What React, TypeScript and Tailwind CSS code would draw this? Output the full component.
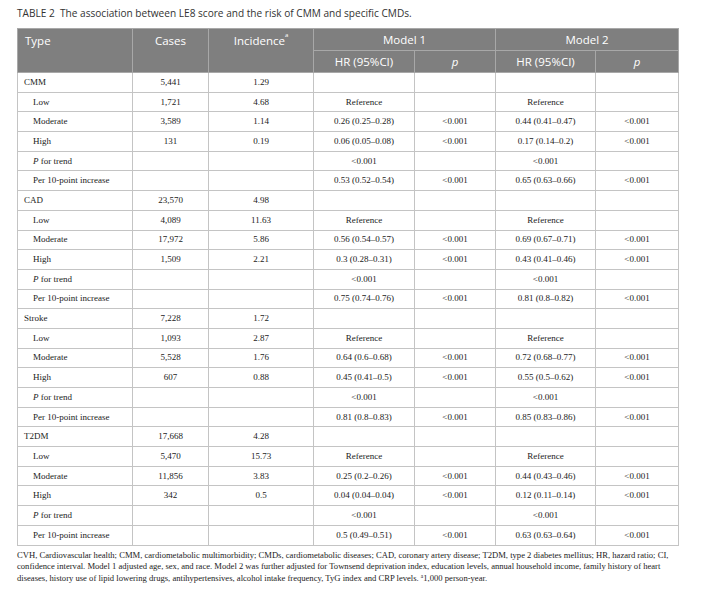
import React from 'react'

type Row = {
  label: React.ReactNode
  group?: boolean
  cases?: string
  inc?: string
  hr1?: string
  p1?: string
  hr2?: string
  p2?: string
}

const groups: { name: string; cases: string; inc: string; rows: string[][] }[] = [
  {
    name: 'CMM',
    cases: '5,441',
    inc: '1.29',
    rows: [
      ['1,721', '4.68', 'Reference', '', 'Reference', ''],
      ['3,589', '1.14', '0.26 (0.25–0.28)', '<0.001', '0.44 (0.41–0.47)', '<0.001'],
      ['131', '0.19', '0.06 (0.05–0.08)', '<0.001', '0.17 (0.14–0.2)', '<0.001'],
      ['', '', '<0.001', '', '<0.001', ''],
      ['', '', '0.53 (0.52–0.54)', '<0.001', '0.65 (0.63–0.66)', '<0.001'],
    ],
  },
  {
    name: 'CAD',
    cases: '23,570',
    inc: '4.98',
    rows: [
      ['4,089', '11.63', 'Reference', '', 'Reference', ''],
      ['17,972', '5.86', '0.56 (0.54–0.57)', '<0.001', '0.69 (0.67–0.71)', '<0.001'],
      ['1,509', '2.21', '0.3 (0.28–0.31)', '<0.001', '0.43 (0.41–0.46)', '<0.001'],
      ['', '', '<0.001', '', '<0.001', ''],
      ['', '', '0.75 (0.74–0.76)', '<0.001', '0.81 (0.8–0.82)', '<0.001'],
    ],
  },
  {
    name: 'Stroke',
    cases: '7,228',
    inc: '1.72',
    rows: [
      ['1,093', '2.87', 'Reference', '', 'Reference', ''],
      ['5,528', '1.76', '0.64 (0.6–0.68)', '<0.001', '0.72 (0.68–0.77)', '<0.001'],
      ['607', '0.88', '0.45 (0.41–0.5)', '<0.001', '0.55 (0.5–0.62)', '<0.001'],
      ['', '', '<0.001', '', '<0.001', ''],
      ['', '', '0.81 (0.8–0.83)', '<0.001', '0.85 (0.83–0.86)', '<0.001'],
    ],
  },
  {
    name: 'T2DM',
    cases: '17,668',
    inc: '4.28',
    rows: [
      ['5,470', '15.73', 'Reference', '', 'Reference', ''],
      ['11,856', '3.83', '0.25 (0.2–0.26)', '<0.001', '0.44 (0.43–0.46)', '<0.001'],
      ['342', '0.5', '0.04 (0.04–0.04)', '<0.001', '0.12 (0.11–0.14)', '<0.001'],
      ['', '', '<0.001', '', '<0.001', ''],
      ['', '', '0.5 (0.49–0.51)', '<0.001', '0.63 (0.63–0.64)', '<0.001'],
    ],
  },
]

const subLabels: React.ReactNode[] = [
  'Low',
  'Moderate',
  'High',
  <>
    <i>P</i> for trend
  </>,
  'Per 10-point increase',
]

const rows: Row[] = groups.flatMap((g) => [
  { label: g.name, group: true, cases: g.cases, inc: g.inc },
  ...g.rows.map((r, i) => ({
    label: subLabels[i],
    cases: r[0],
    inc: r[1],
    hr1: r[2],
    p1: r[3],
    hr2: r[4],
    p2: r[5],
  })),
])

const td = 'h-[19.7px] border border-[#c4c4c4] text-center align-middle p-0 leading-none'
const th = 'border border-[#a8a8a8] font-normal text-white text-[11.5px] leading-none p-0'

export default function App() {
  return (
    <div className="w-[704px] h-[590px] bg-white overflow-hidden pl-[17px] pt-[7px] text-[#222]">
      <p className="font-['Open_Sans',sans-serif] text-[10.1px] leading-[12px] text-[#333] h-[21px] whitespace-nowrap">
        TABLE 2&nbsp; The association between LE8 score and the risk of CMM and specific CMDs.
      </p>

      <table className="table-fixed border-collapse w-[661px] font-['Liberation_Serif',serif] text-[9px]">
        <colgroup>
          <col className="w-[115px]" />
          <col className="w-[76px]" />
          <col className="w-[105px]" />
          <col className="w-[101px]" />
          <col className="w-[81px]" />
          <col className="w-[100px]" />
          <col className="w-[83px]" />
        </colgroup>
        <thead className="bg-[#7f7f7f] font-['Open_Sans',sans-serif]">
          <tr>
            <th rowSpan={2} className={`${th} text-left align-top pl-[7px] pt-[6px]`}>
              Type
            </th>
            <th rowSpan={2} className={`${th} text-center align-top pt-[6px]`}>
              Cases
            </th>
            <th rowSpan={2} className={`${th} text-center align-top pt-[6px]`}>
              Incidence<sup className="text-[6px] align-super">a</sup>
            </th>
            <th colSpan={2} className={`${th} h-[22px] text-center`}>
              Model 1
            </th>
            <th colSpan={2} className={`${th} h-[22px] text-center`}>
              Model 2
            </th>
          </tr>
          <tr>
            <th className={`${th} h-[22px] text-center`}>HR (95%CI)</th>
            <th className={`${th} text-center italic`}>p</th>
            <th className={`${th} text-center`}>HR (95%CI)</th>
            <th className={`${th} text-center italic`}>p</th>
          </tr>
        </thead>
        <tbody>
          {rows.map((r, i) => (
            <tr key={i}>
              <td className={`${td} text-left ${r.group ? 'pl-[6px]' : 'pl-[15px]'}`}>{r.label}</td>
              <td className={td}>{r.cases}</td>
              <td className={td}>{r.inc}</td>
              <td className={td}>{r.hr1}</td>
              <td className={td}>{r.p1}</td>
              <td className={td}>{r.hr2}</td>
              <td className={td}>{r.p2}</td>
            </tr>
          ))}
        </tbody>
      </table>

      <div className="mt-[4px] font-['Liberation_Serif',serif] text-[8.6px] leading-[11.6px] text-[#222] whitespace-nowrap">
        <span className="block">
          CVH, Cardiovascular health; CMM, cardiometabolic multimorbidity; CMDs, cardiometabolic diseases; CAD, coronary artery disease; T2DM, type 2 diabetes mellitus; HR, hazard ratio; CI,
        </span>
        <span className="block">
          confidence interval. Model 1 adjusted age, sex, and race. Model 2 was further adjusted for Townsend deprivation index, education levels, annual household income, family history of heart
        </span>
        <span className="block">
          diseases, history use of lipid lowering drugs, antihypertensives, alcohol intake frequency, TyG index and CRP levels. <sup className="text-[5.5px]">a</sup>1,000 person-year.
        </span>
      </div>
    </div>
  )
}
